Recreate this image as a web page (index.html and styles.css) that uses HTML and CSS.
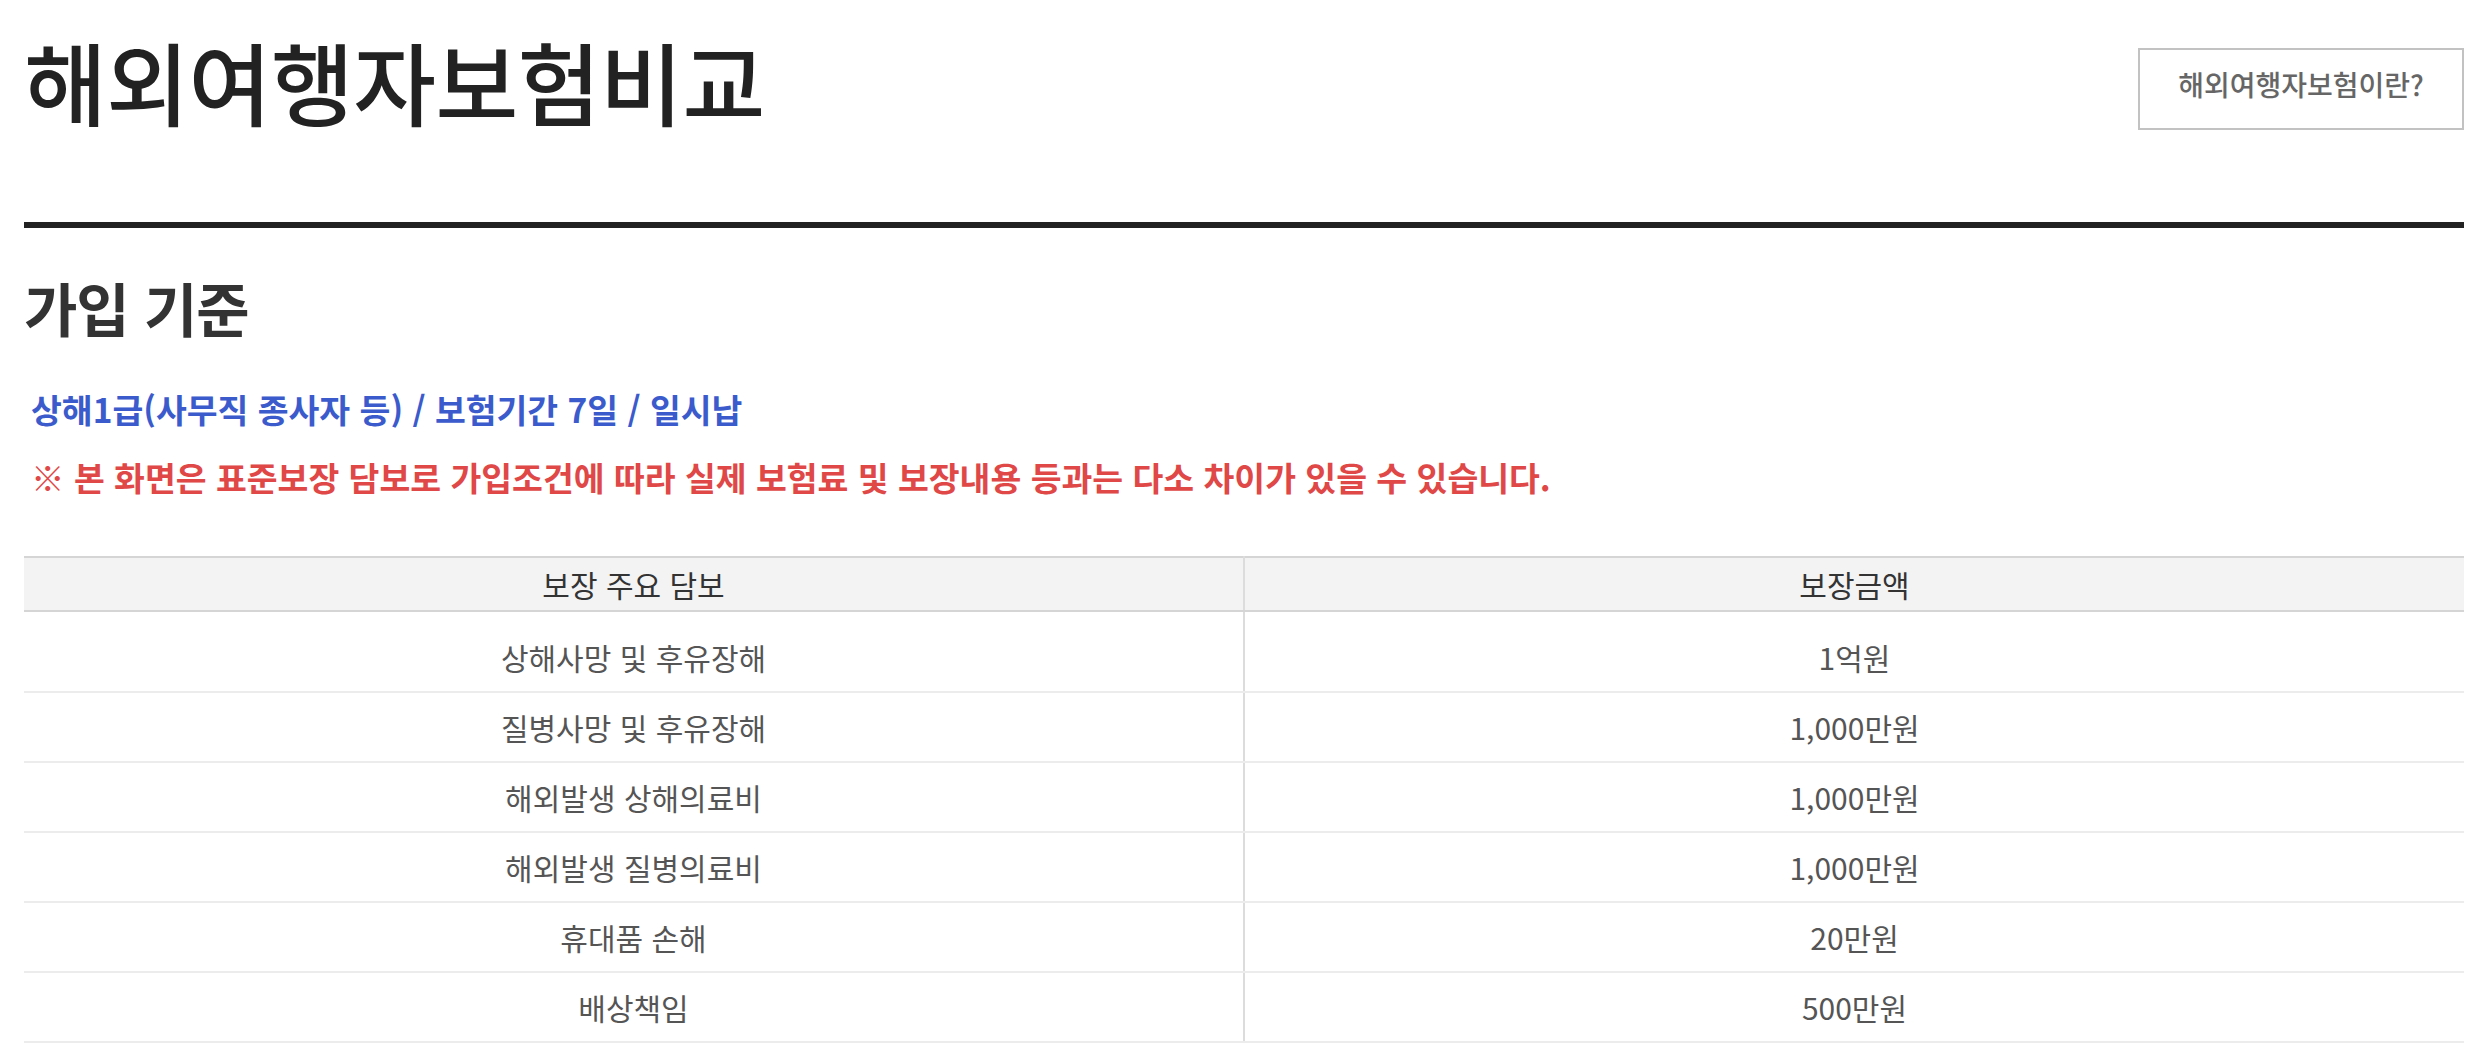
FILE: index.html
```html
<!DOCTYPE html>
<html lang="ko">
<head>
<meta charset="utf-8">
<title>해외여행자보험비교</title>
<link rel="stylesheet" href="styles.css">
</head>
<body>
<div class="page">
  <header class="page-head">
    <h1 class="page-title">해외여행자보험비교</h1>
    <a class="info-btn" href="#">해외여행자보험이란?</a>
  </header>

  <section class="criteria">
    <h2 class="section-title">가입 기준</h2>
    <p class="cond">상해1급(사무직 종사자 등) / 보험기간 7일 / 일시납</p>
    <p class="notice">※ 본 화면은 표준보장 담보로 가입조건에 따라 실제 보험료 및 보장내용 등과는 다소 차이가 있을 수 있습니다.</p>

    <table class="cover">
      <thead>
        <tr><th>보장 주요 담보</th><th>보장금액</th></tr>
      </thead>
      <tbody>
        <tr><td>상해사망 및 후유장해</td><td>1억원</td></tr>
        <tr><td>질병사망 및 후유장해</td><td>1,000만원</td></tr>
        <tr><td>해외발생 상해의료비</td><td>1,000만원</td></tr>
        <tr><td>해외발생 질병의료비</td><td>1,000만원</td></tr>
        <tr><td>휴대품 손해</td><td>20만원</td></tr>
        <tr><td>배상책임</td><td>500만원</td></tr>
      </tbody>
    </table>
  </section>
</div>
</body>
</html>
```

FILE: styles.css
```css
html, body {
  margin: 0;
  padding: 0;
  background: #fff;
}

body {
  font-family: "Noto Sans CJK KR", "Noto Sans", sans-serif;
  color: #333;
}

.page {
  padding: 0 18px 0 24px;
}

.page-head {
  display: flex;
  justify-content: space-between;
  align-items: flex-start;
  padding-top: 35px;
  padding-bottom: 92px;
  border-bottom: 6px solid #222;
}

.page-title {
  margin: 0;
  font-size: 90px;
  line-height: 90px;
  font-weight: 500;
  letter-spacing: -0.5px;
  color: #222;
}

.info-btn {
  margin-top: 13px;
  width: 326px;
  box-sizing: border-box;
  padding: 20px 0 30px;
  border: 2px solid #c2c2c2;
  text-align: center;
  font-size: 28px;
  line-height: 28px;
  font-weight: 500;
  color: #666;
  text-decoration: none;
}

.section-title {
  margin: 50px 0 0;
  font-size: 58px;
  line-height: 58px;
  font-weight: 700;
  letter-spacing: -1px;
  color: #333;
}

.cond {
  margin: 56px 0 0;
  padding-left: 7px;
  font-size: 33.5px;
  line-height: 34px;
  font-weight: 700;
  color: #3b5bcd;
}

.notice {
  margin: 34px 0 0;
  padding-left: 7px;
  font-size: 33.5px;
  line-height: 34px;
  font-weight: 700;
  color: #e04747;
}

.cover {
  width: 100%;
  margin-top: 62px;
  border-collapse: collapse;
  table-layout: fixed;
  border-top: 2px solid #d5d5d5;
}

.cover th,
.cover td {
  width: 50%;
  padding: 0;
  text-align: center;
  vertical-align: middle;
  font-size: 30px;
  line-height: 30px;
}

.cover th {
  height: 52px;
  background: #f3f3f3;
  font-weight: 400;
  color: #333;
  border-bottom: 2px solid #d5d5d5;
}

.cover td {
  height: 68px;
  font-weight: 400;
  color: #555;
  border-bottom: 2px solid #ececec;
}

.cover th:first-child,
.cover td:first-child {
  border-right: 2px solid #dcdcdc;
}

.cover tbody tr:first-child td {
  padding-top: 11px;
}
```
